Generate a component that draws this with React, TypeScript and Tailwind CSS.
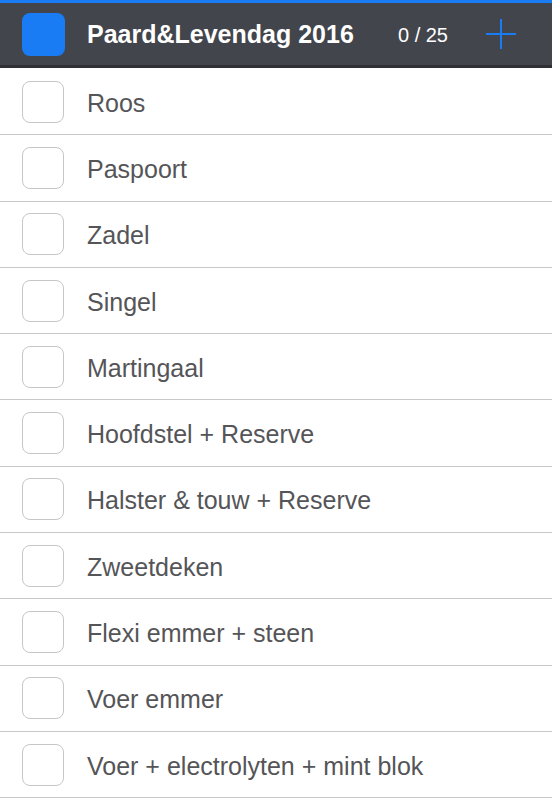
import React from 'react';

const items = [
  'Roos',
  'Paspoort',
  'Zadel',
  'Singel',
  'Martingaal',
  'Hoofdstel + Reserve',
  'Halster & touw + Reserve',
  'Zweetdeken',
  'Flexi emmer + steen',
  'Voer emmer',
  'Voer + electrolyten + mint blok',
];

export default function App() {
  return (
    <div className="w-[552px] h-[800px] overflow-hidden bg-white" style={{ fontFamily: '"Liberation Sans", Arial, sans-serif' }}>
      <div className="h-[3px] bg-[#1a7cf5]" />
      <header className="h-[65px] bg-[#43454c] border-b-[3px] border-[#2f3136] flex items-center">
        <div className="ml-[22px] w-[43px] h-[43px] rounded-[8px] bg-[#1a7cf5]" />
        <h1 className="ml-[22px] text-[25px] font-bold text-white leading-none pt-[1px]">Paard&amp;Levendag 2016</h1>
        <span className="ml-auto text-[20px] text-white leading-none pt-[1px]">0 / 25</span>
        <button className="ml-[37px] mr-[35px] w-[32px] h-[32px]" aria-label="Add">
          <svg viewBox="0 0 32 32" className="w-[32px] h-[32px]" fill="none" stroke="#1a7cf5" strokeWidth="2">
            <path d="M16 1v30M1 16h30" />
          </svg>
        </button>
      </header>
      <ul className="pt-[1px]">
        {items.map((item) => (
          <li key={item} className="h-[66.3px] border-b border-[#c8c8c8] flex items-center">
            <span className="ml-[22px] w-[42px] h-[42px] rounded-[8px] border border-[#c6c6c6] bg-white" />
            <span className="ml-[23px] text-[25px] text-[#555558] leading-none pt-[3px]">{item}</span>
          </li>
        ))}
      </ul>
    </div>
  );
}
